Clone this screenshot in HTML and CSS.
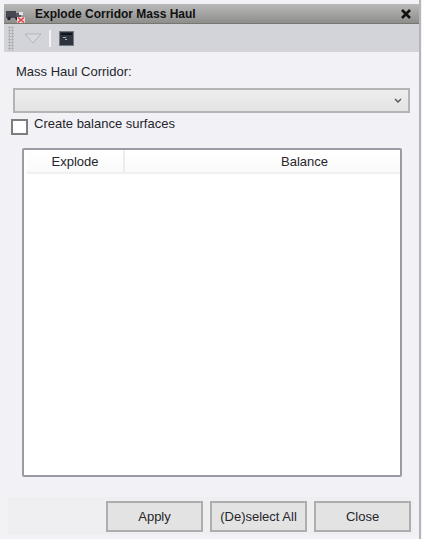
FILE: index.html
```html
<!DOCTYPE html>
<html lang="en">
<head>
<meta charset="utf-8">
<title>Explode Corridor Mass Haul</title>
<link rel="stylesheet" href="styles.css">
</head>
<body>
<div class="window">
  <header class="titlebar">
    <svg class="app-icon" width="20" height="17" viewBox="0 0 20 17">
      <path d="M1 5h10v7H1z" fill="#44474f"/>
      <path d="M11 7h3l2 2v3h-5z" fill="#555861"/>
      <circle cx="4" cy="12.5" r="1.7" fill="#22242a"/>
      <circle cx="12" cy="12.5" r="1.7" fill="#22242a"/>
      <rect x="14" y="6" width="4" height="3" fill="#e4e4e8"/>
      <rect x="12" y="11" width="8" height="6" fill="#f0d4d4"/>
      <path d="M13 11.5l6 5M19 11.5l-6 5" stroke="#d8484c" stroke-width="1.6"/>
    </svg>
    <span class="title">Explode Corridor Mass Haul</span>
    <svg class="close-x" width="12" height="12" viewBox="0 0 12 12">
      <path d="M2 2l8 8M10 2l-8 8" stroke="#111" stroke-width="2.6"/>
    </svg>
  </header>
  <div class="toolbar">
    <div class="grip"></div>
    <svg class="tri" width="18" height="11" viewBox="0 0 18 11">
      <path d="M1 1h16l-8 9z" fill="#d8d9de" stroke="#b4b5ba"/>
    </svg>
    <div class="sep"></div>
    <svg class="console" width="15" height="15" viewBox="0 0 15 15">
      <rect x="0.5" y="0.5" width="14" height="14" fill="#2f3440" stroke="#74777f"/>
      <rect x="2" y="2" width="11" height="2" fill="#12141a"/>
      <path d="M4 6h3v1H4zM6 8h2v1H6z" fill="#aeb2bc"/>
    </svg>
  </div>
  <main class="content">
    <label class="field-label">Mass Haul Corridor:</label>
    <div class="combo">
      <svg width="8" height="5" viewBox="0 0 8 5"><path d="M1 1l3 3 3-3" fill="none" stroke="#555" stroke-width="1.4"/></svg>
    </div>
    <div class="check-row">
      <span class="checkbox"></span>
      <span>Create balance surfaces</span>
    </div>
    <div class="table">
      <div class="thead">
        <div class="th th-explode">Explode</div>
        <div class="th th-balance">Balance</div>
      </div>
    </div>
  </main>
  <footer class="footer">
    <button class="btn">Apply</button>
    <button class="btn">(De)select All</button>
    <button class="btn">Close</button>
  </footer>
</div>
</body>
</html>
```

FILE: styles.css
```css
* { box-sizing: border-box; }
html, body { margin: 0; padding: 0; }
body {
  width: 422px;
  height: 539px;
  overflow: hidden;
  background: #f3f3f6;
  font-family: "Liberation Sans", Arial, sans-serif;
  font-size: 13px;
  color: #26262c;
}
.window {
  width: 421px;
  height: 539px;
  padding: 4px 0 0 4px;
  border-right: 2px solid #b5b6ba;
  display: flex;
  flex-direction: column;
  background: #f1f1f6;
}
.titlebar {
  width: 415px;
  height: 20px;
  flex: none;
  display: flex;
  align-items: center;
  padding: 0 7px 0 1px;
  background: linear-gradient(#b9b9b9, #8e8e8c);
  border-bottom: 1px solid #77776f;
}
.app-icon { flex: none; margin-top: 1px; }
.title {
  margin-left: 10px;
  font-size: 12px;
  font-weight: bold;
  color: #111;
  flex: 1;
}
.toolbar {
  width: 415px;
  height: 28px;
  flex: none;
  display: flex;
  align-items: center;
  padding-left: 4px;
  background: #d3d4d9;
}
.grip {
  width: 6px;
  height: 25px;
  background-image: radial-gradient(circle, #b3b4b9 1px, transparent 1.2px);
  background-size: 3px 3px;
}
.tri { margin-left: 10px; }
.sep { width: 2px; height: 17px; margin-left: 7px; background: #f4f4f6; }
.console { margin-left: 8px; }
.content {
  flex: 1;
  display: flex;
  flex-direction: column;
  padding: 11px 0 0 9px;
}
.field-label { margin-left: 3px; line-height: 17px; }
.combo {
  width: 397px;
  height: 25px;
  margin-top: 8px;
  display: flex;
  align-items: center;
  justify-content: flex-end;
  padding-right: 6px;
  background: linear-gradient(#eeeeee, #e3e3e3);
  border: 2px solid #b4b4b4;
}
.check-row {
  display: flex;
  gap: 6px;
  margin: 3px 0 0 -2px;
  line-height: 16px;
}
.checkbox {
  width: 17px;
  height: 16px;
  margin-top: 3px;
  background: #fff;
  border: 2px solid #7d7d80;
}
.table {
  width: 380px;
  height: 329px;
  margin: 13px 0 0 9px;
  padding: 0 0 0 3px;
  background: #fff;
  border: 2px solid #9b9ca3;
  border-radius: 2px;
}
.thead {
  display: flex;
  height: 24px;
  border-bottom: 2px solid #f0f0f0;
  background: linear-gradient(#ffffff, #fafafa);
}
.th { display: flex; align-items: center; justify-content: center; }
.th-explode { width: 98px; border-right: 2px solid #ececec; }
.th-balance { flex: 1; padding-left: 84px; }
.footer {
  width: 406px;
  height: 38px;
  flex: none;
  margin: 0 0 4px 4px;
  display: flex;
  justify-content: flex-end;
  align-items: center;
  gap: 7px;
  padding-right: 3px;
  background: #efeff2;
}
.btn {
  width: 97px;
  height: 31px;
  padding: 0;
  font: inherit;
  color: inherit;
  background: #e3e3e3;
  border: 2px solid #adadad;
}
```
